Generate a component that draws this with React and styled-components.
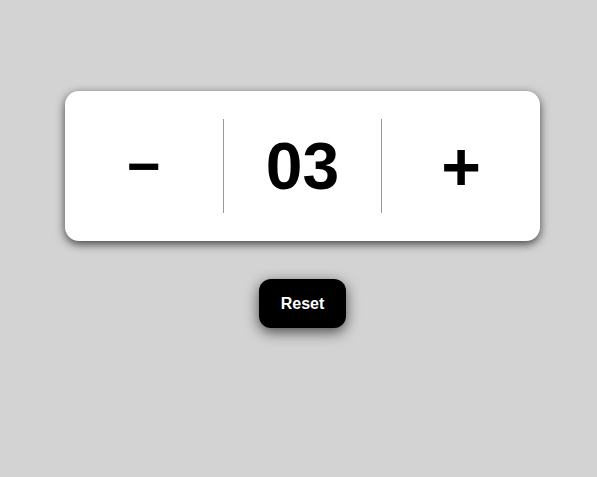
import styled, {createGlobalStyle} from "styled-components";
import {useState} from "react";

const GlobalStyle = createGlobalStyle`
  html, body {
    margin: 0;
    background: #d3d3d3;
  }
  body {
    font-family: "Liberation Sans", Arial, sans-serif;
  }
`;

export default function App() {
    const [count, setCount] = useState(3);

    const format = (n) => (n < 10 && n >= 0 ? "0" + n : String(n));

    return (
        <Page>
            <GlobalStyle/>
            <Counter>
                <Cell>
                    <Control onClick={() => setCount(count - 1)} $small>−</Control>
                </Cell>
                <Cell $divided>
                    <Value>{format(count)}</Value>
                </Cell>
                <Cell $divided>
                    <Control onClick={() => setCount(count + 1)}>+</Control>
                </Cell>
            </Counter>
            <ResetButton onClick={() => setCount(0)}>Reset</ResetButton>
        </Page>
    );
}

const Page = styled.main`
  display: flex;
  flex-direction: column;
  align-items: center;
  row-gap: 38px;
  padding: 91px 0 0 8px;
  min-height: 100vh;
  box-sizing: border-box;
`;

const Counter = styled.section`
  display: flex;
  align-items: center;
  width: 475px;
  height: 150px;
  background: #fff;
  border-radius: 14px;
  box-shadow: 0 3px 10px rgba(0, 0, 0, 0.7);
`;

const Cell = styled.div`
  flex: 1;
  height: 94px;
  display: flex;
  align-items: center;
  justify-content: center;
  border-left: ${({$divided}) => ($divided ? "1px solid #9a9a9a" : "none")};
`;

const Control = styled.button`
  border: none;
  background: none;
  padding: 0;
  cursor: pointer;
  font-family: "Liberation Sans", Arial, sans-serif;
  font-weight: 700;
  font-size: ${({$small}) => ($small ? "58px" : "68px")};
  line-height: 1;
  color: #000;
`;

const Value = styled.span`
  font-family: "Liberation Sans", Arial, sans-serif;
  font-weight: 700;
  font-size: 66px;
  line-height: 1;
  color: #000;
`;

const ResetButton = styled.button`
  border: none;
  border-radius: 12px;
  background: #000;
  color: #fff;
  font-family: "Liberation Sans", Arial, sans-serif;
  font-weight: 700;
  font-size: 16px;
  line-height: 19px;
  padding: 15px 22px;
  cursor: pointer;
  box-shadow: 0 4px 14px rgba(0, 0, 0, 0.65);
`;
